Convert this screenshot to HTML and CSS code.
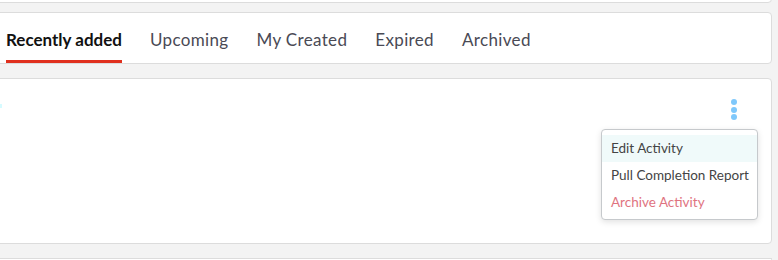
FILE: index.html
```html
<!DOCTYPE html>
<html>
<head>
<meta charset="utf-8">
<link rel="stylesheet" href="styles.css">
</head>
<body>
<div class="page">
  <div class="card card-top"></div>
  <div class="card tabs-card">
    <nav class="tabs">
      <a class="tab active">Recently added</a>
      <a class="tab">Upcoming</a>
      <a class="tab">My Created</a>
      <a class="tab">Expired</a>
      <a class="tab">Archived</a>
    </nav>
  </div>
  <div class="card activity-card">
    <div class="activity-head">
      <span class="edge-mark"></span>
      <button class="kebab" aria-label="More options">
        <span class="dot"></span><span class="dot"></span><span class="dot"></span>
      </button>
    </div>
    <ul class="menu">
      <li class="menu-item hover">Edit Activity</li>
      <li class="menu-item">Pull Completion Report</li>
      <li class="menu-item danger">Archive Activity</li>
    </ul>
  </div>
  <div class="card card-next"></div>
</div>
</body>
</html>
```

FILE: styles.css
```css
html, body {
  margin: 0;
  padding: 0;
  background: #f3f3f3;
  font-family: Lato, "Open Sans", sans-serif;
  overflow: hidden;
}

.page {
  margin-left: -5px;
  width: 777px;
  display: flex;
  flex-direction: column;
}

.card {
  background: #fff;
  border: 1px solid #dcdcdc;
  border-radius: 4px;
  box-sizing: border-box;
}

.card-top {
  height: 23px;
  margin-top: -20px;
}

.tabs-card {
  margin-top: 9px;
  height: 52px;
}

.tabs {
  display: flex;
  gap: 28px;
  padding-left: 10px;
}

.tab {
  display: block;
  padding-top: 17px;
  padding-bottom: 10px;
  line-height: 20px;
  font-size: 17px;
  color: #4a4a55;
  border-bottom: 3px solid transparent;
  letter-spacing: 0.35px;
}

.tab.active {
  color: #111;
  font-weight: 700;
  letter-spacing: 0;
  border-bottom-color: #e0301e;
}

.activity-card {
  margin-top: 14px;
  height: 166px;
  position: relative;
}

.activity-head {
  display: flex;
  justify-content: space-between;
  align-items: flex-start;
  padding: 20px 34px 0 0;
}

.edge-mark {
  display: block;
  width: 2px;
  height: 4px;
  margin-top: 5px;
  margin-left: 4px;
  background: #d6fbff;
}

.kebab {
  border: 0;
  background: none;
  padding: 0;
  display: flex;
  flex-direction: column;
  gap: 1.5px;
}

.dot {
  display: block;
  width: 6px;
  height: 6px;
  border-radius: 50%;
  background: #7fc8fb;
}

.menu {
  position: absolute;
  top: 50px;
  left: 605px;
  width: 157px;
  height: 91px;
  margin: 0;
  padding: 5px 0 0;
  list-style: none;
  box-sizing: border-box;
  background: #fff;
  border: 1px solid #c6c9cc;
  border-radius: 4px;
  box-shadow: 0 2px 6px rgba(0, 0, 0, 0.12);
}

.menu-item {
  height: 27px;
  line-height: 27px;
  padding-left: 9px;
  font-size: 13.5px;
  color: #444;
}

.menu-item.hover {
  background: #f0fafa;
}

.menu-item.danger {
  color: #e0737f;
}

.card-next {
  margin-top: 14px;
  height: 2px;
  border-bottom: 0;
}
```
